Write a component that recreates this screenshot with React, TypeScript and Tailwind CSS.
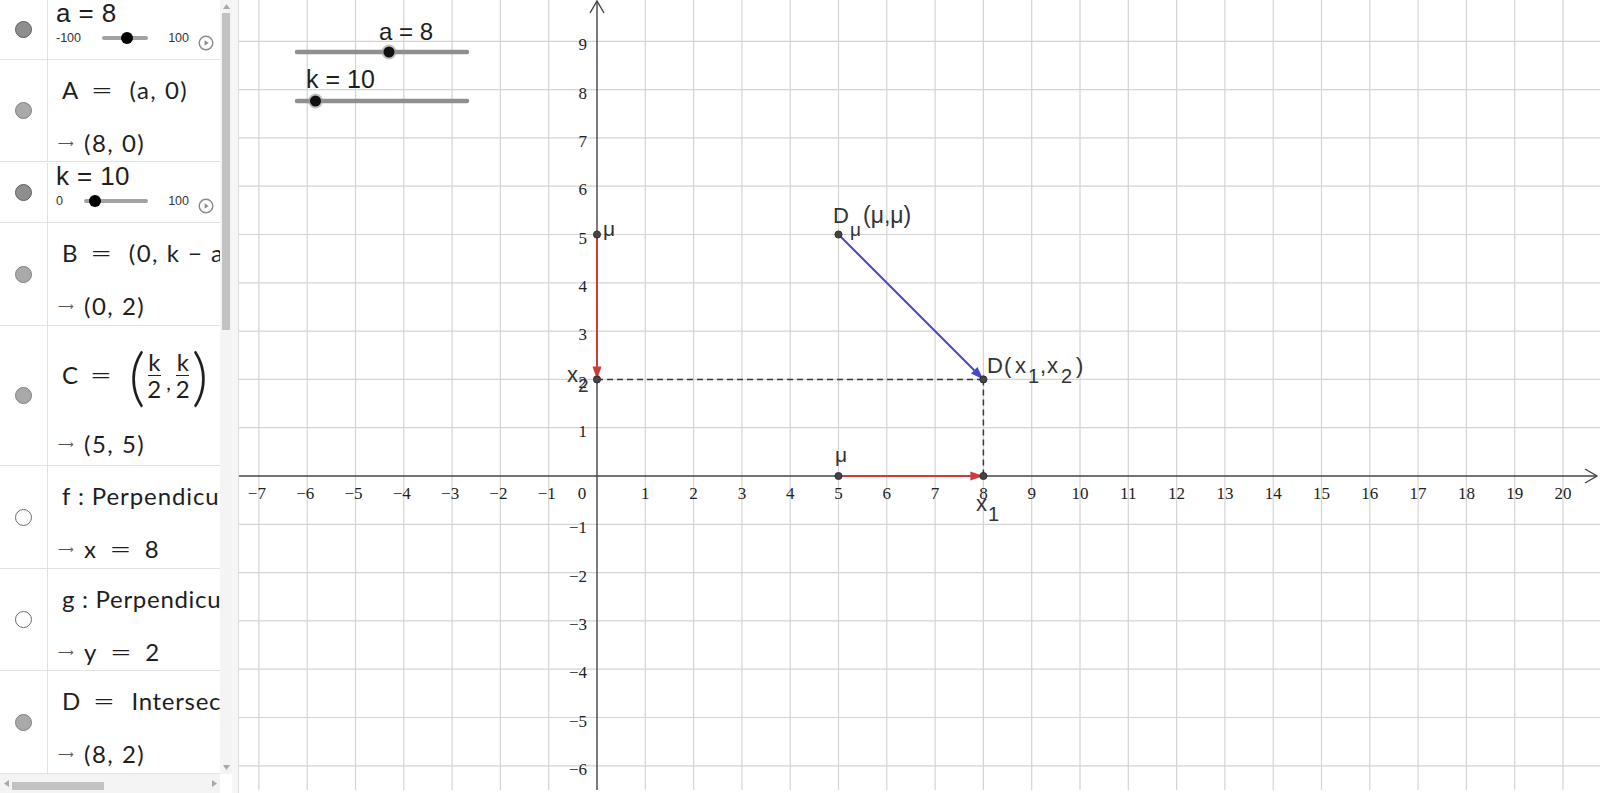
import React from 'react';

const OX = 597;
const OY = 476;
const U = 48.3;
const px = (x: number) => OX + x * U;
const py = (y: number) => OY - y * U;

const xs = Array.from({ length: 28 }, (_, i) => i - 7);
const ys = Array.from({ length: 16 }, (_, i) => i - 6);

const sans = "'Liberation Sans', Arial, sans-serif";
const serif = "'Liberation Serif', 'Times New Roman', serif";

const fmt = (n: number) => (n < 0 ? `\u2212${-n}` : `${n}`);

function Vec({ x1, y1, x2, y2, color }: { x1: number; y1: number; x2: number; y2: number; color: string }) {
  const dx = x2 - x1;
  const dy = y2 - y1;
  const len = Math.hypot(dx, dy);
  const ux = dx / len;
  const uy = dy / len;
  const hl = 13;
  const hw = 4.5;
  const bx = x2 - ux * hl;
  const by = y2 - uy * hl;
  const pts = `${x2},${y2} ${bx - uy * hw},${by + ux * hw} ${bx + uy * hw},${by - ux * hw}`;
  return (
    <g>
      <line x1={x1} y1={y1} x2={bx} y2={by} stroke={color} strokeWidth={2} />
      <polygon points={pts} fill={color} />
    </g>
  );
}

function Dot({ x, y }: { x: number; y: number }) {
  return <circle cx={x} cy={y} r={3.6} fill="#454545" stroke="#222" strokeWidth={0.8} />;
}

function Marker({ kind }: { kind: 'slider' | 'point' | 'line' }) {
  const cls =
    kind === 'slider'
      ? 'bg-[#8e8e8e] border-[#5e5e5e]'
      : kind === 'point'
      ? 'bg-[#a9a9a9] border-[#808080]'
      : 'bg-white border-[#6a6a6a]';
  return <div className={`h-[17px] w-[17px] rounded-full border ${cls}`} />;
}

function PlayIcon() {
  return (
    <svg width="16" height="16" viewBox="0 0 16 16">
      <circle cx="8" cy="8" r="6.8" fill="none" stroke="#8a8a8a" strokeWidth="1.4" />
      <path d="M6.6 5.3 L10.6 8 L6.6 10.7 Z" fill="#8a8a8a" />
    </svg>
  );
}

function SliderRow({ name, min, max, knobLeft }: { name: string; min: string; max: string; knobLeft: string }) {
  return (
    <div className="flex h-[60px] border-b border-[#e2e2e2]">
      <div className="flex w-[48px] shrink-0 items-center justify-center border-r border-[#e2e2e2]">
        <Marker kind="slider" />
      </div>
      <div className="flex min-w-0 flex-1 flex-col pl-[8px] font-['Liberation_Sans',Arial,sans-serif] text-[#1e1e1e]">
        <div className="h-[24px] pt-[1px] text-[26px] leading-[24px] tracking-[0.4px] whitespace-nowrap">{name}</div>
        <div className="flex h-[28px] items-center gap-[21px] pr-[6px] text-[12.5px] text-[#333]">
          <span>{min}</span>
          <div className="relative h-[4px] flex-1 rounded-full bg-[#a3a3a3]">
            <div className={`absolute top-[-4px] h-[12px] w-[12px] rounded-full bg-black ${knobLeft}`} />
          </div>
          <span className="-ml-[1px]">{max}</span>
          <div className="-ml-[12px] mt-[10px]">
            <PlayIcon />
          </div>
        </div>
      </div>
    </div>
  );
}

function Out({ children }: { children: React.ReactNode }) {
  return (
    <div className="mt-[21px] flex h-[32px] items-center pl-[10px] whitespace-nowrap">
      <span className="mr-[11px] inline-block w-[15px] font-['DejaVu_Sans',sans-serif] text-[11px] leading-none text-[#555]">⟶</span>
      <span className="text-[24px] tracking-[1.5px]">{children}</span>
    </div>
  );
}

function Eq() {
  return (
    <span className="mx-[12px] inline-block font-['DejaVu_Sans',sans-serif] text-[26px] leading-none font-extralight">=</span>
  );
}

function MathRow({ h, kind, first, out }: { h: string; kind: 'point' | 'line'; first: React.ReactNode; out: React.ReactNode }) {
  return (
    <div className={`flex border-b border-[#e2e2e2] ${h}`}>
      <div className="flex w-[48px] shrink-0 items-center justify-center border-r border-[#e2e2e2]">
        <Marker kind={kind} />
      </div>
      <div className="flex min-w-0 flex-1 flex-col overflow-hidden pt-[14px] font-['Lato',sans-serif] text-[#1e1e1e]">
        <div className="flex h-[32px] items-center pl-[14px] text-[24px] tracking-[0.7px] whitespace-nowrap">{first}</div>
        <Out>{out}</Out>
      </div>
    </div>
  );
}

function Frac() {
  return (
    <span className="mx-[1px] inline-flex flex-col items-center text-[24px] leading-[22px]">
      <span>k</span>
      <span className="my-[2px] h-[1px] w-[13px] bg-[#222]" />
      <span>2</span>
    </span>
  );
}

function AlgebraPanel() {
  return (
    <div className="flex h-full w-[232px] shrink-0 flex-col bg-white">
      <div className="flex h-[774px]">
        <div className="w-[220px] overflow-hidden">
          <SliderRow name="a = 8" min="-100" max="100" knobLeft="left-[19px]" />
          <MathRow
            h="h-[102px]"
            kind="point"
            first={
              <>
                <span>A</span>
                <Eq />
                <span className="ml-[4px] tracking-[1.5px]">(a, 0)</span>
              </>
            }
            out="(8, 0)"
          />
          <div className="h-[1px]" />
          <SliderRow name="k = 10" min="0" max="100" knobLeft="left-[5px]" />
          <MathRow
            h="h-[103px]"
            kind="point"
            first={
              <>
                <span>B</span>
                <Eq />
                <span className="ml-[4px] tracking-[1.5px]">(0, k − a)</span>
              </>
            }
            out="(0, 2)"
          />
          <div className="flex h-[140px] border-b border-[#e2e2e2]">
            <div className="flex w-[48px] shrink-0 items-center justify-center border-r border-[#e2e2e2]">
              <Marker kind="point" />
            </div>
            <div className="flex min-w-0 flex-1 flex-col overflow-hidden pt-[14px] font-['Lato',sans-serif] text-[#1e1e1e]">
              <div className="flex h-[70px] items-center pl-[14px] text-[24px] whitespace-nowrap">
                <span>C</span>
                <Eq />
                <span className="ml-[5px] mr-[1px] text-[64px] leading-[64px] font-light">(</span>
                <Frac />
                <span className="mx-[4px] mt-[14px] text-[20px]">,</span>
                <Frac />
                <span className="ml-[1px] text-[64px] leading-[64px] font-light">)</span>
              </div>
              <div className="-mt-[3px]">
                <Out>(5, 5)</Out>
              </div>
            </div>
          </div>
          <MathRow
            h="h-[103px]"
            kind="line"
            first={<span className="tracking-[0.9px]">f : Perpendicular Line</span>}
            out={
              <>
                x<Eq />8
              </>
            }
          />
          <MathRow
            h="h-[102px]"
            kind="line"
            first={<span>g : Perpendicular Line</span>}
            out={
              <>
                y<Eq />2
              </>
            }
          />
          <MathRow
            h="h-[103px]"
            kind="point"
            first={
              <>
                <span>D</span>
                <Eq />
                <span className="ml-[4px]">Intersect(f, g)</span>
              </>
            }
            out="(8, 2)"
          />
        </div>
        <div className="flex w-[12px] flex-col bg-[#f4f4f4]">
          <div className="flex h-[13px] items-center justify-center">
            <svg width="7" height="5" viewBox="0 0 7 5">
              <path d="M0 5 L3.5 0 L7 5 Z" fill="#a8a8a8" />
            </svg>
          </div>
          <div className="mx-[2px] h-[317px] bg-[#c2c2c2]" />
          <div className="flex-1" />
          <div className="flex h-[13px] items-center justify-center">
            <svg width="7" height="5" viewBox="0 0 7 5">
              <path d="M0 0 L3.5 5 L7 0 Z" fill="#a8a8a8" />
            </svg>
          </div>
        </div>
      </div>
      <div className="flex h-[19px]">
        <div className="flex w-[220px] items-center bg-[#f4f4f4]">
          <div className="flex w-[12px] justify-center">
            <svg width="5" height="7" viewBox="0 0 5 7">
              <path d="M5 0 L0 3.5 L5 7 Z" fill="#a8a8a8" />
            </svg>
          </div>
          <div className="mt-[4px] h-[8px] w-[92px] bg-[#c2c2c2]" />
          <div className="flex-1" />
          <div className="flex w-[12px] justify-center">
            <svg width="5" height="7" viewBox="0 0 5 7">
              <path d="M0 0 L5 3.5 L0 7 Z" fill="#a8a8a8" />
            </svg>
          </div>
        </div>
        <div className="w-[12px] bg-white" />
      </div>
    </div>
  );
}

function Graphics() {
  return (
    <div className="relative h-full flex-1 bg-white">
      <svg className="block h-full w-full" viewBox="239 0 1361 793">
        {xs.map((i) =>
          i === 0 ? null : <line key={`gx${i}`} x1={px(i)} y1={0} x2={px(i)} y2={790} stroke="#d4d4d4" strokeWidth={1.2} />
        )}
        {ys.map((j) =>
          j === 0 ? null : <line key={`gy${j}`} x1={239} y1={py(j)} x2={1600} y2={py(j)} stroke="#d4d4d4" strokeWidth={1.2} />
        )}
        <line x1={239} y1={OY} x2={1597} y2={OY} stroke="#444" strokeWidth={1.4} />
        <polyline points={`1585,469 1597,${OY} 1585,483`} fill="none" stroke="#444" strokeWidth={1.4} />
        <line x1={OX} y1={790} x2={OX} y2={1} stroke="#444" strokeWidth={1.4} />
        <polyline points={`590,13 ${OX},1 604,13`} fill="none" stroke="#444" strokeWidth={1.4} />

        <g fontFamily={serif} fontSize={17} fill="#222">
          {xs.map((i) =>
            i === 0 ? null : (
              <text key={`lx${i}`} x={i < 0 ? px(i) - 2 : px(i)} y={499} textAnchor="middle">
                {fmt(i)}
              </text>
            )
          )}
          <text x={582} y={499} textAnchor="middle">
            0
          </text>
          {ys.map((j) =>
            j === 0 ? null : (
              <text key={`ly${j}`} x={587} y={py(j) + 9} textAnchor="end">
                {fmt(j)}
              </text>
            )
          )}
        </g>

        <line x1={OX} y1={py(2)} x2={px(8)} y2={py(2)} stroke="#3a3a3a" strokeWidth={1.5} strokeDasharray="6 4" />
        <line x1={px(8)} y1={py(2)} x2={px(8)} y2={OY} stroke="#3a3a3a" strokeWidth={1.5} strokeDasharray="6 4" />

        <Vec x1={OX} y1={py(5)} x2={OX} y2={py(2)} color="#d23a3a" />
        <Vec x1={px(5)} y1={OY} x2={px(8)} y2={OY} color="#d23a3a" />
        <Vec x1={px(5)} y1={py(5)} x2={px(8)} y2={py(2)} color="#4747cc" />

        <Dot x={OX} y={py(5)} />
        <Dot x={OX} y={py(2)} />
        <Dot x={px(5)} y={py(5)} />
        <Dot x={px(8)} y={py(2)} />
        <Dot x={px(5)} y={OY} />
        <Dot x={px(8)} y={OY} />

        <g fontFamily={sans} fill="#333">
          <text x={603} y={236} fontSize={21}>μ</text>
          <text x={567} y={382} fontSize={22}>x</text>
          <text x={578} y={392} fontSize={19}>2</text>
          <text x={833} y={223} fontSize={22}>D</text>
          <text x={850} y={236} fontSize={19}>μ</text>
          <text x={863} y={223} fontSize={23}>(μ,μ)</text>
          <text x={987} y={373} fontSize={22}>D</text>
          <text x={1004} y={373} fontSize={22}>(</text>
          <text x={1015} y={373} fontSize={22}>x</text>
          <text x={1028} y={383} fontSize={20}>1</text>
          <text x={1040} y={373} fontSize={22}>,</text>
          <text x={1047} y={373} fontSize={22}>x</text>
          <text x={1061} y={383} fontSize={20}>2</text>
          <text x={1076} y={373} fontSize={22}>)</text>
          <text x={835} y={462} fontSize={21}>μ</text>
          <text x={976} y={511} fontSize={22}>x</text>
          <text x={988} y={521} fontSize={20}>1</text>
        </g>

        <g fontFamily={sans} fill="#1e1e1e">
          <text x={379} y={40} fontSize={24}>a = 8</text>
          <text x={306} y={88} fontSize={25}>k = 10</text>
        </g>
        <line x1={297} y1={52} x2={467} y2={52} stroke="#8f8f8f" strokeWidth={4.5} strokeLinecap="round" />
        <circle cx={389} cy={52} r={7.5} fill="#9a9a9a" opacity={0.6} />
        <circle cx={389} cy={52} r={5.5} fill="#111" />
        <line x1={297} y1={101} x2={467} y2={101} stroke="#8f8f8f" strokeWidth={4.5} strokeLinecap="round" />
        <circle cx={315.5} cy={101} r={7.5} fill="#9a9a9a" opacity={0.6} />
        <circle cx={315.5} cy={101} r={5.5} fill="#111" />
      </svg>
    </div>
  );
}

export default function App() {
  return (
    <div className="flex h-[793px] w-[1600px] overflow-hidden bg-white">
      <AlgebraPanel />
      <div className="h-full w-[7px] shrink-0 border-r border-[#dcdcdc] bg-[#f6f6f6]" />
      <Graphics />
    </div>
  );
}
